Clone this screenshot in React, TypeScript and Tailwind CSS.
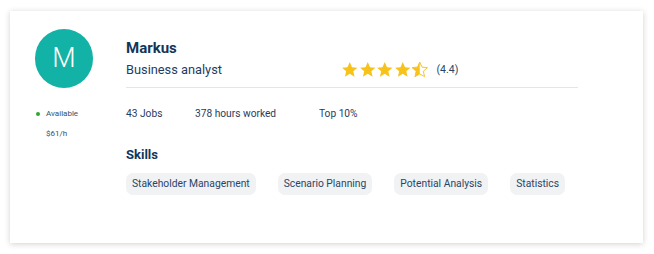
import React from "react";

const Star = ({ type }: { type: "full" | "half" }) => (
  <svg width="17.5" height="17.5" viewBox="0 0 24 24" className="block">
    <defs>
      <clipPath id="halfclip">
        <rect x="0" y="0" width="12" height="24" />
      </clipPath>
    </defs>
    {type === "full" ? (
      <path d="M12 1.5l3.1 6.9 7.4.7-5.6 5 1.7 7.4L12 17.6 5.4 21.5l1.7-7.4-5.6-5 7.4-.7z" fill="#f7c21a" />
    ) : (
      <>
        <path d="M12 1.5l3.1 6.9 7.4.7-5.6 5 1.7 7.4L12 17.6 5.4 21.5l1.7-7.4-5.6-5 7.4-.7z" fill="none" stroke="#f7c21a" strokeWidth="1.3" strokeLinejoin="round" />
        <path d="M12 1.5l3.1 6.9 7.4.7-5.6 5 1.7 7.4L12 17.6 5.4 21.5l1.7-7.4-5.6-5 7.4-.7z" fill="#f7c21a" clipPath="url(#halfclip)" />
      </>
    )}
  </svg>
);

export default function App() {
  const skills = ["Stakeholder Management", "Scenario Planning", "Potential Analysis", "Statistics"];
  return (
    <div className="w-[654px] h-[254px] bg-white pt-[11px] pl-[10px]" style={{ fontFamily: "Roboto, 'Noto Sans', sans-serif" }}>
      <div className="w-[633px] h-[232px] bg-white shadow-[0_1px_6px_rgba(0,0,0,0.18)] flex pl-[25px] pt-[18px] text-[#1b3a5c]">
        <div className="w-[91px] shrink-0 flex flex-col">
          <div className="w-[58px] h-[59px] rounded-full bg-[#13b2a6] flex items-center justify-center text-white text-[27px] font-light">
            M
          </div>
          <div className="mt-[20px] flex items-center ml-[1px]">
            <span className="w-[4px] h-[4px] rounded-full bg-[#2ea82e]" />
            <span className="ml-[6px] text-[8px] leading-[12px] text-[#3a4f66]">Available</span>
          </div>
          <div className="mt-[8px] ml-[11px] text-[8px] leading-[12px] text-[#3a4f66]">$61/h</div>
        </div>
        <div className="flex flex-col w-[452px] shrink-0">
          <div className="mt-[10px] text-[15px] leading-[18px] font-bold text-[#12365a]">Markus</div>
          <div className="mt-[4px] flex items-center">
            <div className="w-[215px] text-[12.8px] leading-[18px] text-[#1f3d5f]">Business analyst</div>
            <div className="flex items-center">
              <Star type="full" />
              <Star type="full" />
              <Star type="full" />
              <Star type="full" />
              <Star type="half" />
            </div>
            <span className="ml-[8px] text-[10.5px] text-[#2a4566]">(4.4)</span>
          </div>
          <div className="mt-[8px] h-px bg-[#e3e5e8]" />
          <div className="mt-[19px] flex text-[10.2px] leading-[14px] text-[#1f3d5f]">
            <span className="w-[69px]">43 Jobs</span>
            <span className="w-[124px]">378 hours worked</span>
            <span>Top 10%</span>
          </div>
          <div className="mt-[26px] text-[13px] leading-[16px] font-bold text-[#12365a]">Skills</div>
          <div className="mt-[10px] flex gap-[22px]">
            {skills.map((s) => (
              <div key={s} className="shrink-0 whitespace-nowrap h-[22px] px-[6px] rounded-[7px] bg-[#f1f2f4] flex items-center text-[10.3px] text-[#2a4566]">
                {s}
              </div>
            ))}
          </div>
        </div>
      </div>
    </div>
  );
}
